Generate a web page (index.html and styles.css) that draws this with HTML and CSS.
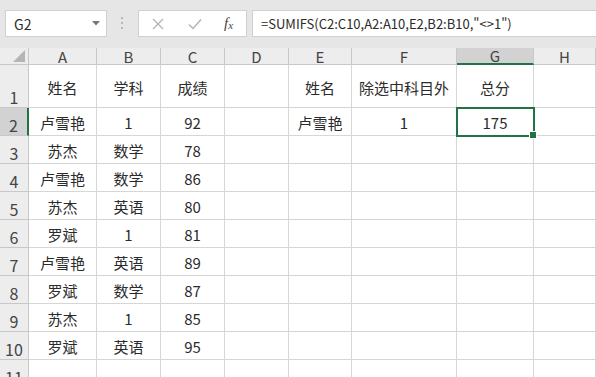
FILE: index.html
```html
<!DOCTYPE html>
<html lang="zh-CN">
<head>
    <meta charset="UTF-8">
    <title>SUMIFS</title>
    <link rel="stylesheet" href="styles.css">
</head>
<body>
    <div class="toolbar">
        <div class="name-box">
            <span>G2</span>
            <svg class="drop" width="8" height="5" viewBox="0 0 8 5"><path d="M0 0h8L4 4.5z" fill="#777"/></svg>
        </div>
        <svg class="grip" width="3" height="13" viewBox="0 0 3 13">
            <rect x="0" y="0" width="2" height="2" fill="#b9b9b9"/>
            <rect x="0" y="5" width="2" height="2" fill="#b9b9b9"/>
            <rect x="0" y="10" width="2" height="2" fill="#b9b9b9"/>
        </svg>
        <div class="fx-box">
            <svg width="12" height="12" viewBox="0 0 12 12"><path d="M1 1l10 10M11 1L1 11" stroke="#b4b4b4" stroke-width="1.3" fill="none"/></svg>
            <svg width="14" height="12" viewBox="0 0 14 12"><path d="M1 6.5l4 4L13 1.5" stroke="#b4b4b4" stroke-width="1.5" fill="none"/></svg>
            <span class="fx">f<sub>x</sub></span>
        </div>
        <div class="formula">=SUMIFS(C2:C10,A2:A10,E2,B2:B10,"&lt;&gt;1")</div>
    </div>

    <div class="sheet">
        <!-- 列标题 -->
        <div class="corner"><svg width="12" height="12" viewBox="0 0 12 12"><path d="M12 0v12H0z" fill="#b5b5b5"/></svg></div>
        <div class="col-head">A</div>
        <div class="col-head">B</div>
        <div class="col-head">C</div>
        <div class="col-head">D</div>
        <div class="col-head">E</div>
        <div class="col-head">F</div>
        <div class="col-head selected">G</div>
        <div class="col-head">H</div>

        <div class="row-head">1</div>
        <div class="cell">姓名</div>
        <div class="cell">学科</div>
        <div class="cell">成绩</div>
        <div class="cell"></div>
        <div class="cell">姓名</div>
        <div class="cell">除选中科目外</div>
        <div class="cell">总分</div>
        <div class="cell"></div>

        <div class="row-head selected">2</div>
        <div class="cell">卢雪艳</div>
        <div class="cell">1</div>
        <div class="cell">92</div>
        <div class="cell"></div>
        <div class="cell">卢雪艳</div>
        <div class="cell">1</div>
        <div class="cell active">175</div>
        <div class="cell"></div>

        <div class="row-head">3</div>
        <div class="cell">苏杰</div>
        <div class="cell">数学</div>
        <div class="cell">78</div>
        <div class="cell"></div><div class="cell"></div><div class="cell"></div><div class="cell"></div><div class="cell"></div>

        <div class="row-head">4</div>
        <div class="cell">卢雪艳</div>
        <div class="cell">数学</div>
        <div class="cell">86</div>
        <div class="cell"></div><div class="cell"></div><div class="cell"></div><div class="cell"></div><div class="cell"></div>

        <div class="row-head">5</div>
        <div class="cell">苏杰</div>
        <div class="cell">英语</div>
        <div class="cell">80</div>
        <div class="cell"></div><div class="cell"></div><div class="cell"></div><div class="cell"></div><div class="cell"></div>

        <div class="row-head">6</div>
        <div class="cell">罗斌</div>
        <div class="cell">1</div>
        <div class="cell">81</div>
        <div class="cell"></div><div class="cell"></div><div class="cell"></div><div class="cell"></div><div class="cell"></div>

        <div class="row-head">7</div>
        <div class="cell">卢雪艳</div>
        <div class="cell">英语</div>
        <div class="cell">89</div>
        <div class="cell"></div><div class="cell"></div><div class="cell"></div><div class="cell"></div><div class="cell"></div>

        <div class="row-head">8</div>
        <div class="cell">罗斌</div>
        <div class="cell">数学</div>
        <div class="cell">87</div>
        <div class="cell"></div><div class="cell"></div><div class="cell"></div><div class="cell"></div><div class="cell"></div>

        <div class="row-head">9</div>
        <div class="cell">苏杰</div>
        <div class="cell">1</div>
        <div class="cell">85</div>
        <div class="cell"></div><div class="cell"></div><div class="cell"></div><div class="cell"></div><div class="cell"></div>

        <div class="row-head">10</div>
        <div class="cell">罗斌</div>
        <div class="cell">英语</div>
        <div class="cell">95</div>
        <div class="cell"></div><div class="cell"></div><div class="cell"></div><div class="cell"></div><div class="cell"></div>

        <div class="row-head">11</div>
        <div class="cell"></div><div class="cell"></div><div class="cell"></div><div class="cell"></div>
        <div class="cell"></div><div class="cell"></div><div class="cell"></div><div class="cell"></div>
    </div>
</body>
</html>
```

FILE: styles.css
```css
:root {
    --toolbar-bg: #e6e6e6;
    --head-bg: #ededed;
    --head-selected: #d2d2d2;
    --grid-color: #d6d6d6;
    --head-border: #c8c8c8;
    --green: #217346;
    --text-color: #2b2b2b;
}
* {
    box-sizing: border-box;
}
body {
    margin: 0;
    width: 596px;
    height: 377px;
    overflow: hidden;
    background: var(--toolbar-bg);
    font-family: "Noto Sans CJK SC", "Noto Sans", sans-serif;
    color: var(--text-color);
}
.toolbar {
    display: flex;
    align-items: center;
    height: 48px;
    padding: 10px 0 11px 5px;
}
.name-box {
    display: flex;
    align-items: center;
    justify-content: space-between;
    width: 102px;
    height: 27px;
    padding: 0 6px 0 8px;
    background: #fff;
    border: 1px solid #d0d0d0;
    font-size: 14px;
}
.grip {
    margin: 0 14px 0 14px;
}
.fx-box {
    display: flex;
    align-items: center;
    width: 109px;
    height: 27px;
    padding: 0 12px 0 13px;
    gap: 24px;
    background: #fff;
    border: 1px solid #d0d0d0;
}
.fx {
    font-family: "Liberation Serif", serif;
    font-style: italic;
    font-size: 15px;
    color: #444;
    margin-left: -2px;
}
.fx sub {
    font-size: 11px;
    vertical-align: -1px;
}
.formula {
    flex: 1;
    height: 27px;
    margin-left: 5px;
    padding-left: 8px;
    background: #fff;
    border: 1px solid #d0d0d0;
    border-right: none;
    font-size: 13px;
    line-height: 25px;
    white-space: nowrap;
}
.sheet {
    display: grid;
    grid-template-columns: 29px 68px 64px 64px 64px 63px 105px 77px 62px;
    grid-template-rows: 17px 43px repeat(10, 28px);
    background: #fff;
}
.corner,
.col-head,
.row-head {
    background: var(--head-bg);
    border-right: 1px solid var(--head-border);
    border-bottom: 1px solid var(--head-border);
    color: #444;
    font-size: 15px;
}
.corner {
    display: flex;
    align-items: flex-end;
    justify-content: flex-end;
    padding: 0 3px 2px 0;
}
.col-head {
    display: flex;
    align-items: center;
    justify-content: center;
    line-height: 1;
}
.row-head {
    display: flex;
    align-items: flex-end;
    justify-content: center;
    line-height: 1;
    padding-bottom: 2px;
    font-size: 16px;
}
.col-head.selected {
    background: var(--head-selected);
    border-bottom: 2px solid var(--green);
}
.row-head.selected {
    background: var(--head-selected);
    border-right: 2px solid var(--green);
}
.cell {
    display: flex;
    align-items: center;
    justify-content: center;
    padding-top: 2px;
    border-right: 1px solid var(--grid-color);
    border-bottom: 1px solid var(--grid-color);
    font-size: 15px;
    white-space: nowrap;
}
.cell.active {
    position: relative;
    outline: 2px solid var(--green);
    outline-offset: -1px;
}
.cell.active::after {
    content: "";
    position: absolute;
    right: -4px;
    bottom: -4px;
    width: 6px;
    height: 6px;
    background: var(--green);
    border: 1px solid #fff;
}
```
